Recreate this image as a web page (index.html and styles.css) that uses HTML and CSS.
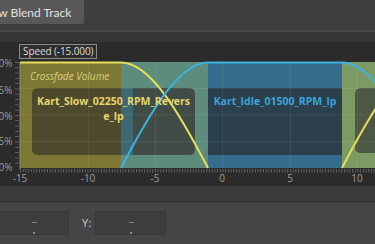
FILE: index.html
```html
<!DOCTYPE html>
<html lang="en">
<head>
    <meta charset="UTF-8">
    <meta name="viewport" content="width=device-width, initial-scale=1.0">
    <title>Blend Track</title>
    <link rel="stylesheet" href="styles.css">
</head>
<body>
    <div class="toolbar">
        <button class="blend-btn">New Blend Track</button>
    </div>
    <div class="divider"></div>

    <div class="graph">
        <div class="tooltip">Speed (-15.000)</div>
        <svg class="plot" width="375" height="144" viewBox="0 42 375 144">
            <defs>
                <pattern id="ticks" x="20" y="0" width="2.7" height="10" patternUnits="userSpaceOnUse">
                    <rect x="0" y="0" width="0.8" height="10" fill="#6c6c6c"/>
                </pattern>
                <pattern id="yticks" x="0" y="62" width="10" height="5.3" patternUnits="userSpaceOnUse">
                    <rect x="0" y="0" width="10" height="0.8" fill="#666"/>
                </pattern>
            </defs>

            <!-- clip areas -->
            <rect x="20" y="62" width="101" height="106" fill="#7c7834"/>
            <rect x="121" y="62" width="87" height="106" fill="#5e8c7c"/>
            <rect x="208" y="62" width="134" height="106" fill="#356c8b"/>
            <rect x="342" y="62" width="40" height="106" fill="#7e9a64"/>

            <!-- clip bodies -->
            <path d="M38 88 H121 V155 H38 Q32 155 32 149 V94 Q32 88 38 88 Z" fill="#4d492c"/>
            <rect x="121" y="88" width="12" height="67" fill="#3e6874"/>
            <path d="M133 88 H189 Q195 88 195 94 V149 Q195 155 189 155 H133 Z" fill="#414c46"/>
            <rect x="208" y="88" width="134" height="67" fill="#2b404c"/>
            <path d="M361 88 H380 V153 H361 Q355 153 355 147 V94 Q355 88 361 88 Z" fill="#4c5844"/>

            <!-- grid -->
            <g stroke="#ffffff" stroke-opacity="0.07" stroke-width="1">
                <line x1="20" y1="88.5" x2="375" y2="88.5"/>
                <line x1="20" y1="115" x2="375" y2="115"/>
                <line x1="20" y1="141.5" x2="375" y2="141.5"/>
                <line x1="88.5" y1="62" x2="88.5" y2="168"/>
                <line x1="155.5" y1="62" x2="155.5" y2="168"/>
                <line x1="222.5" y1="62" x2="222.5" y2="168"/>
                <line x1="290.5" y1="62" x2="290.5" y2="168"/>
                <line x1="357.5" y1="62" x2="357.5" y2="168"/>
            </g>

            <!-- axes -->
            <line x1="20" y1="62" x2="20" y2="169" stroke="#8a8a6a" stroke-width="1"/>
            <rect x="15" y="62" width="4" height="106" fill="url(#yticks)"/>
            <rect x="20" y="169" width="360" height="3.5" fill="url(#ticks)"/>

            <!-- crossfade curves -->
            <path d="M20 62.5 H121 C150.1 62.5 178.9 112.3 208 168" fill="none" stroke="#e6df5c" stroke-width="2"/>
            <path d="M342 168 C371.1 112.3 399.9 62.5 429 62.5" fill="none" stroke="#e6df5c" stroke-width="2"/>
            <path d="M121 168 C150.1 112.3 178.9 62.5 208 62.5 H342 C371.1 62.5 399.9 112.3 429 168" fill="none" stroke="#3cb2e2" stroke-width="2"/>

            <!-- labels -->
            <text class="crossfade" x="30" y="80">Crossfade Volume</text>
            <text class="clip-name slow" x="113.5" y="105">Kart_Slow_02250_RPM_Revers</text>
            <text class="clip-name slow" x="113.5" y="120">e_lp</text>
            <text class="clip-name idle" x="275" y="105">Kart_Idle_01500_RPM_lp</text>

            <text class="y-label" x="12.5" y="67">100%</text>
            <text class="y-label" x="12.5" y="94">75%</text>
            <text class="y-label" x="12.5" y="120">50%</text>
            <text class="y-label" x="12.5" y="145">25%</text>
            <text class="y-label" x="12.5" y="171">0%</text>

            <text class="x-label" x="20" y="182">-15</text>
            <text class="x-label" x="88" y="182">-10</text>
            <text class="x-label" x="155" y="182">-5</text>
            <text class="x-label" x="222" y="182">0</text>
            <text class="x-label" x="290" y="182">5</text>
            <text class="x-label" x="357" y="182">10</text>
        </svg>
    </div>

    <div class="strip"></div>

    <div class="props">
        <div class="num-box first"><span class="dash"></span></div>
        <span class="axis-label">Y:</span>
        <div class="num-box"><span class="dash"></span></div>
    </div>
</body>
</html>
```

FILE: styles.css
```css
body {
    margin: 0;
    background-color: #3e3e3e;
    font-family: "Open Sans", "Noto Sans", sans-serif;
    overflow: hidden;
    width: 375px;
    height: 244px;
}

.toolbar {
    height: 30px;
    display: flex;
    align-items: flex-start;
}

.blend-btn {
    flex: none;
    margin-left: -29px;
    height: 24px;
    padding: 0 13px 0 12px;
    white-space: nowrap;
    background-color: #585858;
    color: #e2e2e2;
    border: none;
    border-radius: 0 0 3px 0;
    font-family: Lato, "Open Sans", sans-serif;
    font-size: 12px;
}

.divider {
    height: 10px;
    border-top: 2px solid #4a4a4a;
    background-color: #363636;
}

.graph {
    position: relative;
    height: 144px;
    background-color: #2b2b2b;
}

.plot {
    display: block;
}

/* hover readout on top of the plot */
.tooltip {
    position: absolute;
    left: 19px;
    top: 2px;
    height: 13px;
    padding: 0 3px;
    border: 1px solid #8c8c8c;
    background-color: #2e2e2e;
    color: #dcdcdc;
    font-size: 10px;
    line-height: 13px;
    letter-spacing: -0.1px;
}

.crossfade {
    font-family: "Open Sans", sans-serif;
    font-style: italic;
    font-size: 10px;
    fill: #d9cf7c;
}

.clip-name {
    font-family: "Open Sans", sans-serif;
    font-weight: 700;
    font-size: 10.5px;
    text-anchor: middle;
}

.slow {
    fill: #e4d66c;
}

.idle {
    fill: #3aa3da;
}

.y-label,
.x-label {
    font-family: "Open Sans", sans-serif;
    font-size: 10px;
    fill: #9c9c9c;
}

.y-label {
    text-anchor: end;
}

.x-label {
    text-anchor: middle;
}

.strip {
    height: 15px;
    background-color: #3b3b3b;
    border-bottom: 1px solid #2f2f2f;
}

.props {
    height: 42px;
    background-color: #454545;
    display: flex;
    align-items: flex-start;
    padding-top: 9px;
    box-sizing: border-box;
}

.num-box {
    position: relative;
    width: 71px;
    height: 24px;
    box-sizing: border-box;
    background-color: #3d3d3d;
    border: 1px solid #383838;
}

.num-box.first {
    margin-left: -2px;
}

.dash {
    position: absolute;
    left: 50%;
    top: 10px;
    width: 5px;
    height: 1px;
    margin-left: -2px;
    background-color: #858585;
}

/* little drag grip under the value */
.num-box::after {
    content: "";
    position: absolute;
    left: 50%;
    bottom: 0;
    width: 2px;
    height: 2px;
    margin-left: -1px;
    background-color: #8a8a8a;
}

.axis-label {
    margin: 0 4px 0 13px;
    color: #cfcfcf;
    font-size: 11px;
    line-height: 24px;
}
```
